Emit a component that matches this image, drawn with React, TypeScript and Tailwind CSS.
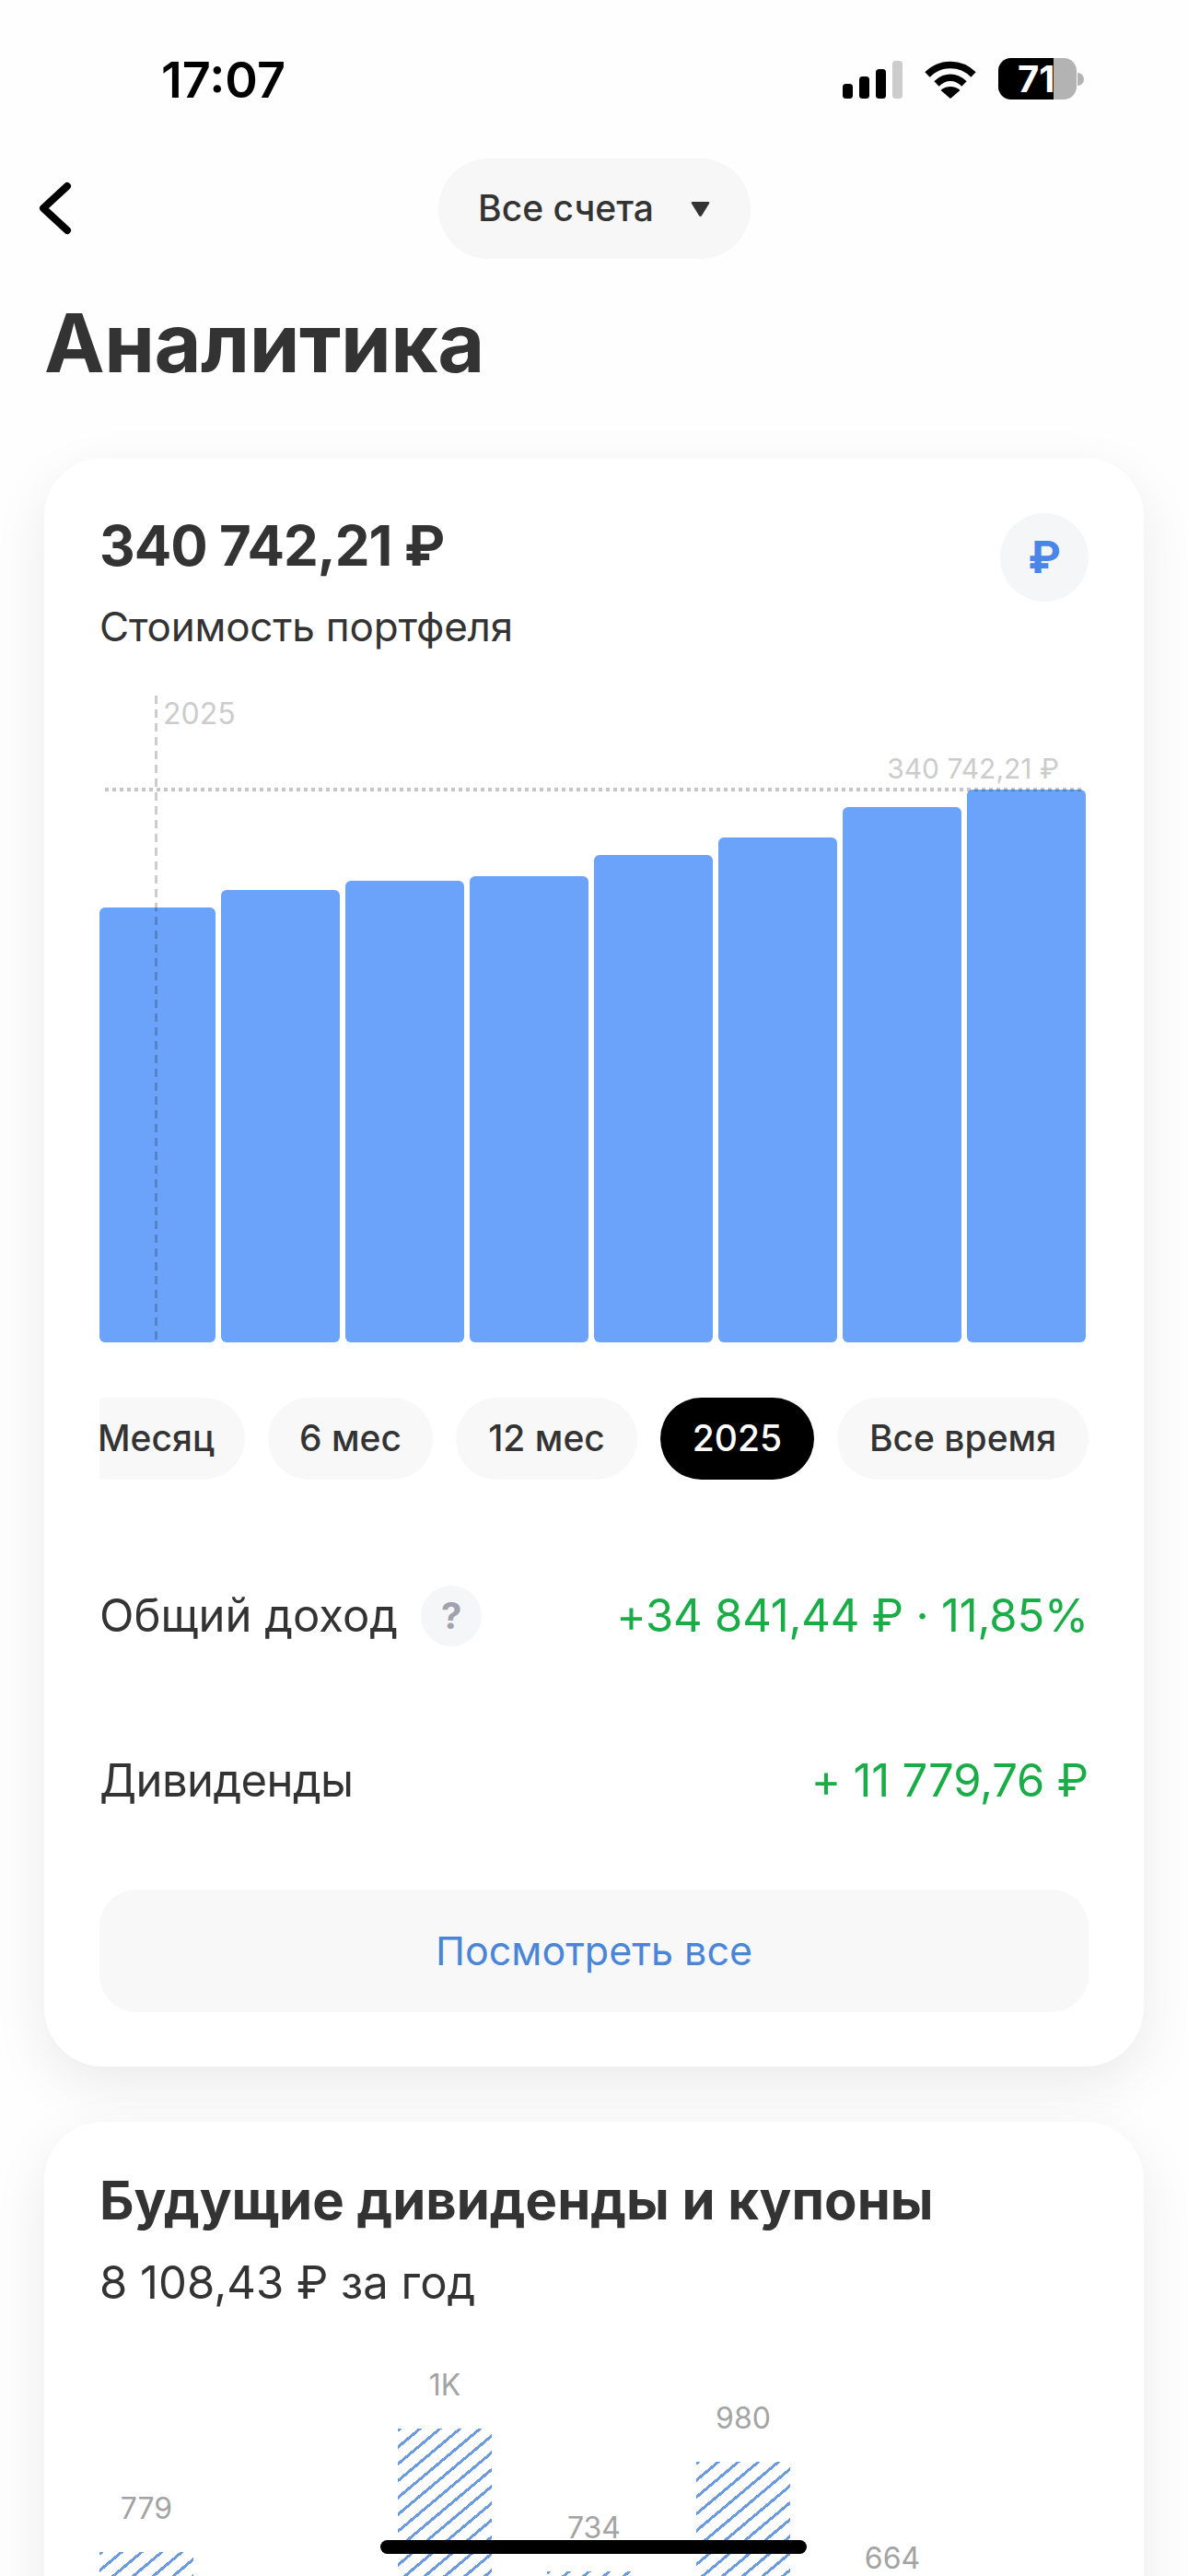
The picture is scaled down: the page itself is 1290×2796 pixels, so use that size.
const bars = [
  { top: 985, width: "w-[126px]" },
  { top: 966, width: "w-[129px]" },
  { top: 956, width: "w-[129px]" },
  { top: 951, width: "w-[129px]" },
  { top: 928, width: "w-[129px]" },
  { top: 909, width: "w-[129px]" },
  { top: 876, width: "w-[129px]" },
  { top: 857, width: "w-[129px]" },
];

const periods = [
  { label: "Месяц", className: "w-[193px] -ml-[35px]" },
  { label: "6 мес", className: "w-[179px]" },
  { label: "12 мес", className: "w-[197px]" },
  { label: "2025", className: "w-[167px] bg-black text-white" },
  { label: "Все время", className: "w-[273px]" },
];

const futureBars = [
  { label: "779", top: 2767 },
  { label: "", top: 2796 },
  { label: "1K", top: 2633 },
  { label: "734", top: 2788 },
  { label: "980", top: 2669 },
  { label: "664", top: 2821 },
];

function StatusBar() {
  return (
    <div className="flex h-[172px] items-start justify-between pr-[113px] pl-[175px] pt-[60px]">
      <span className="text-[54px] leading-[54px] font-semibold text-black">17:07</span>
      <div className="mt-[3px] flex items-center gap-[23px]">
        <svg width="66" height="42" viewBox="0 0 66 42">
          <rect x="1" y="26" width="11" height="16" rx="3.5" fill="#000" />
          <rect x="19" y="18" width="11" height="24" rx="3.5" fill="#000" />
          <rect x="37" y="10" width="11" height="32" rx="3.5" fill="#000" />
          <rect x="55" y="1" width="11" height="41" rx="3.5" fill="#ccc" />
        </svg>
        <svg width="58" height="44" viewBox="0 0 58 44">
          <path d="M4 17 C18 3 40 3 54 17" fill="none" stroke="#000" strokeWidth="7.5" />
          <path d="M14 27 C23 18 35 18 44 27" fill="none" stroke="#000" strokeWidth="7.5" />
          <path d="M29 43 L18.5 34 C24 28.5 34 28.5 39.5 34 Z" fill="#000" />
        </svg>
        <div className="flex items-center">
          <div className="flex h-[45px] w-[85px] items-center overflow-hidden rounded-[14px] bg-[#b3b3b3]">
            <div className="flex h-full w-[60px] items-center overflow-hidden bg-black pl-[21px]">
              <span className="text-[40px] leading-none font-bold text-white">71</span>
            </div>
          </div>
          <div className="ml-[1px] h-[14px] w-[7px] rounded-r-full bg-[#b3b3b3]" />
        </div>
      </div>
    </div>
  );
}

function Header() {
  return (
    <div className="relative flex h-[109px] items-center justify-center">
      <svg
        className="absolute top-[25px] left-[40px]"
        width="40"
        height="58"
        viewBox="0 0 40 58"
        fill="none"
      >
        <path
          d="M33 5 L7 29 L33 53"
          stroke="#000"
          strokeWidth="8"
          strokeLinecap="round"
          strokeLinejoin="round"
        />
      </svg>
      <div className="flex h-[109px] w-[339px] items-center justify-center gap-[40px] rounded-full bg-[#f7f7f7]">
        <span className="text-[39px] font-medium text-[#333]">Все счета</span>
        <svg width="21" height="16" viewBox="0 0 21 16">
          <path d="M2 0 H19 Q21 0 20 2 L12 15 Q10.5 17 9 15 L1 2 Q0 0 2 0 Z" fill="#333" />
        </svg>
      </div>
    </div>
  );
}

export default function App() {
  return (
    <div className="relative h-[2796px] overflow-hidden bg-[#fefefe] font-['Inter',sans-serif]">
      <StatusBar />
      <Header />
      <h1 className="mt-[43px] pl-[48px] text-[88px] leading-[96px] font-bold tracking-[-0.5px] text-[#333]">Аналитика</h1>

      <section className="mx-[48px] mt-[77px] h-[1746px] rounded-[64px] bg-white px-[60px] pt-[60px] shadow-[0_20px_60px_rgba(0,0,0,0.08)]">
        <div className="flex items-start justify-between">
          <div>
            <div className="text-[60px] leading-[70px] font-bold tracking-[-1px] text-[#333]">340 742,21 ₽</div>
            <div className="mt-[28px] text-[44px] leading-[50px] tracking-[-0.2px] text-[#333]">Стоимость портфеля</div>
          </div>
          <div className="flex h-[96px] w-[96px] items-center justify-center rounded-full bg-[#f5f6f8] text-[48px] font-bold text-[#4a86e8]">
            ₽
          </div>
        </div>

        <div className="relative mt-[48px] h-[704px] overflow-hidden">
          <div className="absolute inset-0 flex items-end justify-start gap-[6px]">
            {bars.map((bar) => (
              <div
                key={bar.top}
                className={`${bar.width} rounded-[6px] bg-[#6ba3fa]`}
                style={{ height: 1457 - bar.top }}
              />
            ))}
          </div>
          <div className="absolute top-[2px] bottom-0 left-[60px] w-[3px] bg-[repeating-linear-gradient(180deg,rgba(0,0,0,0.2)_0,rgba(0,0,0,0.2)_9px,transparent_9px,transparent_15px)]" />
          <div className="absolute top-[102px] right-[4px] left-[6px] h-[4px] bg-[repeating-linear-gradient(90deg,rgba(0,0,0,0.22)_0,rgba(0,0,0,0.22)_4px,transparent_4px,transparent_8px)]" />
          <span className="absolute top-[3px] left-[69px] text-[32px] leading-[38px] text-[#ccc]">2025</span>
          <span className="absolute top-[63px] right-[32px] text-[30px] leading-[36px] text-[#ccc]">340 742,21 ₽</span>
        </div>

        <div className="mt-[60px] flex gap-[25px] overflow-hidden">
          {periods.map((period) => (
            <div
              key={period.label}
              className={`flex h-[89px] shrink-0 items-center justify-center rounded-full text-[39px] font-medium ${
                period.label === "2025" ? "" : "bg-[#f8f8f8] text-[#333]"
              } ${period.className}`}
            >
              {period.label}
            </div>
          ))}
        </div>

        <div className="mt-[115px] flex h-[66px] items-center justify-between">
          <div className="flex items-center gap-[25px]">
            <span className="text-[49px] text-[#333]">Общий доход</span>
            <span className="flex h-[66px] w-[66px] items-center justify-center rounded-full bg-[#f5f6f8] text-[40px] font-bold text-[#a0a3ad]">
              ?
            </span>
          </div>
          <span className="text-[49px] tracking-[-0.2px] text-[#1aad47]">+34 841,44 ₽ · 11,85%</span>
        </div>

        <div className="mt-[113px] flex h-[66px] items-center justify-between">
          <span className="text-[49px] tracking-[-0.6px] text-[#333]">Дивиденды</span>
          <span className="text-[49px] tracking-[-0.2px] text-[#1aad47]">+ 11 779,76 ₽</span>
        </div>

        <button className="mt-[85px] flex h-[133px] w-full items-center justify-center rounded-[40px] bg-[#f8f8f8] text-[43px] text-[#4a86d8]">
          Посмотреть все
        </button>
      </section>

      <section className="mx-[48px] mt-[60px] h-[600px] rounded-[64px] bg-white px-[60px] pt-[50px] shadow-[0_20px_60px_rgba(0,0,0,0.08)]">
        <h2 className="text-[58px] leading-[70px] font-bold text-[#333]">Будущие дивиденды и купоны</h2>
        <div className="mt-[27px] text-[49px] leading-[56px] text-[#333]">8 108,43 ₽ за год</div>
        <div className="mt-[60px] flex h-[300px] items-start gap-[60px]">
          {futureBars.map((bar) => (
            <div key={bar.label || "empty"} className="relative h-[300px] w-[102px]">
              <span
                className="absolute left-0 w-full text-center text-[32px] leading-[38px] text-[#a3a3a3]"
                style={{ top: bar.top - 2563 - 66 }}
              >
                {bar.label}
              </span>
              {bar.label && (
                <div
                  className="absolute inset-x-0 bottom-0 bg-[repeating-linear-gradient(140deg,#6a9be0_0,#6a9be0_3px,transparent_3px,transparent_14px)]"
                  style={{ top: bar.top - 2563 }}
                />
              )}
            </div>
          ))}
        </div>
      </section>

      <div className="absolute top-[2757px] left-[413px] h-[15px] w-[463px] rounded-full bg-black" />
    </div>
  );
}
